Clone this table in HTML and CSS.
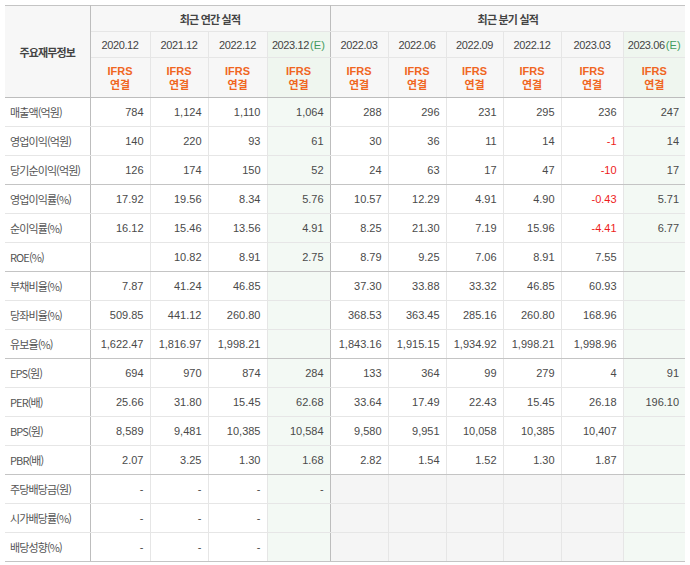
FILE: index.html
```html
<!DOCTYPE html>
<html lang="ko">
<head>
<meta charset="utf-8">
<link rel="stylesheet" href="styles.css">
</head>
<body>
<table class="fin">
  <colgroup>
    <col class="c-label">
    <col class="c60"><col class="c58"><col class="c59"><col class="c63">
    <col class="c58"><col class="c58"><col class="c57"><col class="c58"><col class="c62"><col class="c62">
  </colgroup>
  <thead>
    <tr class="h1">
      <th rowspan="3" class="corner sepr">주요재무정보</th>
      <th colspan="4" class="grp sepr">최근 연간 실적</th>
      <th colspan="6" class="grp">최근 분기 실적</th>
    </tr>
    <tr class="h2">
      <th>2020.12</th><th>2021.12</th><th>2022.12</th><th class="est sepr">2023.12<span class="e">(E)</span></th>
      <th>2022.03</th><th>2022.06</th><th>2022.09</th><th>2022.12</th><th>2023.03</th><th class="est">2023.06<span class="e">(E)</span></th>
    </tr>
    <tr class="h3">
      <th>IFRS<br>연결</th><th>IFRS<br>연결</th><th>IFRS<br>연결</th><th class="est sepr">IFRS<br>연결</th>
      <th>IFRS<br>연결</th><th>IFRS<br>연결</th><th>IFRS<br>연결</th><th>IFRS<br>연결</th><th>IFRS<br>연결</th><th class="est">IFRS<br>연결</th>
    </tr>
  </thead>
  <tbody>
    <tr><th>매출액(억원)</th><td>784</td><td>1,124</td><td>1,110</td><td class="est sepr">1,064</td><td>288</td><td>296</td><td>231</td><td>295</td><td>236</td><td class="est">247</td></tr>
    <tr><th>영업이익(억원)</th><td>140</td><td>220</td><td>93</td><td class="est sepr">61</td><td>30</td><td>36</td><td>11</td><td>14</td><td class="neg">-1</td><td class="est">14</td></tr>
    <tr class="gend"><th>당기순이익(억원)</th><td>126</td><td>174</td><td>150</td><td class="est sepr">52</td><td>24</td><td>63</td><td>17</td><td>47</td><td class="neg">-10</td><td class="est">17</td></tr>
    <tr><th>영업이익률(%)</th><td>17.92</td><td>19.56</td><td>8.34</td><td class="est sepr">5.76</td><td>10.57</td><td>12.29</td><td>4.91</td><td>4.90</td><td class="neg">-0.43</td><td class="est">5.71</td></tr>
    <tr><th>순이익률(%)</th><td>16.12</td><td>15.46</td><td>13.56</td><td class="est sepr">4.91</td><td>8.25</td><td>21.30</td><td>7.19</td><td>15.96</td><td class="neg">-4.41</td><td class="est">6.77</td></tr>
    <tr class="gend"><th>ROE(%)</th><td></td><td>10.82</td><td>8.91</td><td class="est sepr">2.75</td><td>8.79</td><td>9.25</td><td>7.06</td><td>8.91</td><td>7.55</td><td class="est"></td></tr>
    <tr><th>부채비율(%)</th><td>7.87</td><td>41.24</td><td>46.85</td><td class="est sepr"></td><td>37.30</td><td>33.88</td><td>33.32</td><td>46.85</td><td>60.93</td><td class="est"></td></tr>
    <tr><th>당좌비율(%)</th><td>509.85</td><td>441.12</td><td>260.80</td><td class="est sepr"></td><td>368.53</td><td>363.45</td><td>285.16</td><td>260.80</td><td>168.96</td><td class="est"></td></tr>
    <tr class="gend"><th>유보율(%)</th><td>1,622.47</td><td>1,816.97</td><td>1,998.21</td><td class="est sepr"></td><td>1,843.16</td><td>1,915.15</td><td>1,934.92</td><td>1,998.21</td><td>1,998.96</td><td class="est"></td></tr>
    <tr><th>EPS(원)</th><td>694</td><td>970</td><td>874</td><td class="est sepr">284</td><td>133</td><td>364</td><td>99</td><td>279</td><td>4</td><td class="est">91</td></tr>
    <tr><th>PER(배)</th><td>25.66</td><td>31.80</td><td>15.45</td><td class="est sepr">62.68</td><td>33.64</td><td>17.49</td><td>22.43</td><td>15.45</td><td>26.18</td><td class="est">196.10</td></tr>
    <tr><th>BPS(원)</th><td>8,589</td><td>9,481</td><td>10,385</td><td class="est sepr">10,584</td><td>9,580</td><td>9,951</td><td>10,058</td><td>10,385</td><td>10,407</td><td class="est"></td></tr>
    <tr class="gend"><th>PBR(배)</th><td>2.07</td><td>3.25</td><td>1.30</td><td class="est sepr">1.68</td><td>2.82</td><td>1.54</td><td>1.52</td><td>1.30</td><td>1.87</td><td class="est"></td></tr>
    <tr><th>주당배당금(원)</th><td>-</td><td>-</td><td>-</td><td class="est sepr">-</td><td class="na"></td><td class="na"></td><td class="na"></td><td class="na"></td><td class="na"></td><td class="est"></td></tr>
    <tr><th>시가배당률(%)</th><td>-</td><td>-</td><td>-</td><td class="est sepr"></td><td class="na"></td><td class="na"></td><td class="na"></td><td class="na"></td><td class="na"></td><td class="est"></td></tr>
    <tr class="gend"><th>배당성향(%)</th><td>-</td><td>-</td><td>-</td><td class="est sepr"></td><td class="na"></td><td class="na"></td><td class="na"></td><td class="na"></td><td class="na"></td><td class="est"></td></tr>
  </tbody>
</table>
</body>
</html>
```

FILE: styles.css
```css
html, body {
  margin: 0;
  padding: 0;
  background: #fff;
}
body {
  padding: 5px 0 0 5px;
  font-family: "Liberation Sans", "Noto Sans CJK KR", sans-serif;
}
.fin {
  border-collapse: collapse;
  table-layout: fixed;
  width: 680px;
  border-top: 1px solid #c4c4c4;
  border-bottom: 1px solid #c4c4c4;
}
.c-label { width: 85px; }
.c57 { width: 57px; }
.c58 { width: 58px; }
.c59 { width: 59px; }
.c60 { width: 60px; }
.c62 { width: 62px; }
.c63 { width: 63px; }

.fin th, .fin td {
  padding: 0;
  border-bottom: 1px solid #e6e6e6;
  border-left: 1px solid #e6e6e6;
}
.fin tr > :first-child {
  border-left: none;
}
.fin thead th {
  background: #f7f7f7;
  color: #333;
  font-weight: normal;
  text-align: center;
}
.fin thead th.est {
  background: #eff6ef;
}
.fin .corner {
  font-family: "Noto Sans CJK KR", sans-serif;
  font-weight: bold;
  font-size: 11px;
  letter-spacing: -0.9px;
  color: #444;
  border-right: 1px solid #bdbdbd;
  border-bottom: 1px solid #bdbdbd;
}
.fin .h1 th { height: 25px; }
.fin .h1 .grp {
  font-family: "Noto Sans CJK KR", sans-serif;
  font-weight: bold;
  font-size: 11px;
  letter-spacing: -0.8px;
  color: #444;
}
.fin .h2 th {
  height: 25px;
  font-size: 11px;
  letter-spacing: -0.4px;
  color: #444;
}
.fin .h2 .e {
  color: #3f9b5e;
  letter-spacing: 0.2px;
  margin-left: 1px;
}
.fin .h3 th {
  height: 39px;
  border-bottom: 1px solid #bdbdbd;
  color: #f0661f;
  font-size: 11px;
  font-weight: bold;
  line-height: 14px;
}
.fin .sepr {
  border-right: 1px solid #bdbdbd;
}
.fin tbody th {
  height: 28px;
  text-align: left;
  padding-left: 5px;
  font-family: "Noto Sans CJK KR", sans-serif;
  font-weight: normal;
  font-size: 11px;
  letter-spacing: -0.9px;
  color: #555;
  background: #fff;
  border-right: 1px solid #bdbdbd;
}
.fin tbody td {
  height: 28px;
  text-align: right;
  padding-right: 6px;
  font-size: 11px;
  color: #4a4a4a;
}
.fin tbody td.est {
  background: #f3f9f4;
}
.fin tbody td.na {
  background: #f5f5f5;
}
.fin tbody td.neg {
  color: #ee1c1c;
}
.fin tr.gend > th,
.fin tr.gend > td {
  border-bottom: 1px solid #c4c4c4;
}
```
